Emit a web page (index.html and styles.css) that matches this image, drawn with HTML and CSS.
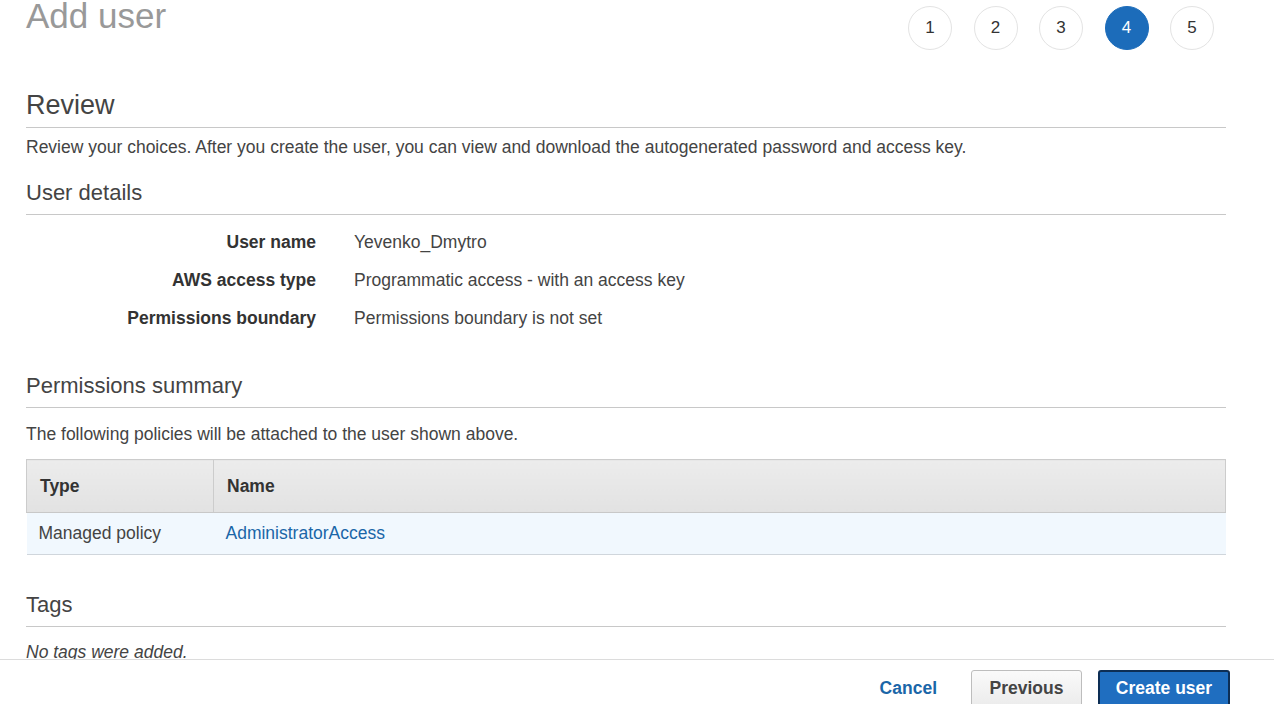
FILE: index.html
```html
<!DOCTYPE html>
<html>
<head>
<meta charset="utf-8">
<link rel="stylesheet" href="styles.css">
</head>
<body>
<div class="page">
  <div class="top">
    <h1 class="title">Add user</h1>
    <ol class="steps">
      <li class="step">1</li>
      <li class="step">2</li>
      <li class="step">3</li>
      <li class="step active">4</li>
      <li class="step">5</li>
    </ol>
  </div>

  <h2 class="h-main">Review</h2>
  <p class="intro">Review your choices. After you create the user, you can view and download the autogenerated password and access key.</p>

  <h3 class="h-sec">User details</h3>
  <dl class="details">
    <dt>User name</dt><dd>Yevenko_Dmytro</dd>
    <dt>AWS access type</dt><dd>Programmatic access - with an access key</dd>
    <dt>Permissions boundary</dt><dd>Permissions boundary is not set</dd>
  </dl>

  <h3 class="h-sec perm">Permissions summary</h3>
  <p class="intro small">The following policies will be attached to the user shown above.</p>
  <table class="policies">
    <thead>
      <tr><th class="c-type">Type</th><th>Name</th></tr>
    </thead>
    <tbody>
      <tr><td>Managed policy</td><td><a class="link" href="#">AdministratorAccess</a></td></tr>
    </tbody>
  </table>

  <h3 class="h-sec tags">Tags</h3>
  <p class="notags">No tags were added.</p>
</div>

<div class="footer">
  <a class="cancel" href="#">Cancel</a>
  <button class="btn prev">Previous</button>
  <button class="btn primary">Create user</button>
</div>
</body>
</html>
```

FILE: styles.css
```css
* { box-sizing: border-box; }
html, body { margin: 0; padding: 0; background: #fff; }
body {
  font-family: "Liberation Sans", Arial, sans-serif;
  color: #444;
  overflow: hidden;
  height: 704px;
}
.page {
  width: 1200px;
  margin-left: 26px;
}
.top {
  display: flex;
  justify-content: space-between;
  align-items: flex-start;
  height: 86px;
}
.title {
  margin: -6px 0 0 0;
  font-size: 35px;
  font-weight: normal;
  color: #999;
  line-height: 44px;
}
.steps {
  list-style: none;
  margin: 6px 12px 0 0;
  padding: 0;
  display: flex;
  gap: 21.5px;
}
.step {
  width: 44px;
  height: 44px;
  border-radius: 50%;
  border: 1px solid #e3e3e3;
  display: flex;
  align-items: center;
  justify-content: center;
  font-size: 17px;
  color: #333;
}
.step.active {
  background: #1c6cba;
  border-color: #1c6cba;
  color: #fff;
}
.h-main {
  margin: 0;
  font-size: 27px;
  font-weight: normal;
  color: #444;
  line-height: 38px;
  padding-bottom: 3px;
  border-bottom: 1px solid #c8c8c8;
}
.intro {
  margin: 8px 0 0 0;
  font-size: 17.5px;
  line-height: 22px;
  color: #444;
}
.h-sec {
  margin: 20px 0 0 0;
  font-size: 22px;
  font-weight: normal;
  color: #444;
  line-height: 30px;
  padding-bottom: 6px;
  border-bottom: 1px solid #c8c8c8;
}
.details {
  display: grid;
  grid-template-columns: 290px 1fr;
  column-gap: 38px;
  row-gap: 16px;
  margin: 16px 0 0 0;
  font-size: 17.5px;
  line-height: 22px;
}
.details dt {
  text-align: right;
  font-weight: bold;
  color: #333;
}
.details dd { margin: 0; color: #444; }
.h-sec.perm { margin-top: 42px; }
.intro.small { margin-top: 15px; }
.policies {
  margin-top: 14px;
  width: 1200px;
  border-collapse: collapse;
  font-size: 17.5px;
}
.policies th {
  text-align: left;
  font-weight: bold;
  color: #333;
  height: 53px;
  padding: 0 13px;
  background: linear-gradient(#ececec, #e2e2e2);
  border: 1px solid #cccccc;
  border-bottom: 1px solid #c8c8c8;
}
.policies th.c-type { width: 187px; }
.policies td {
  height: 42px;
  padding: 0 12px;
  background: #f1f8fe;
  border-bottom: 1px solid #d0d6dc;
  color: #444;
}
.link { color: #1a66a8; text-decoration: none; }
.h-sec.tags { margin-top: 35px; }
.notags {
  margin: 15px 0 0 0;
  font-size: 17.5px;
  font-style: italic;
  color: #444;
}
.footer {
  position: fixed;
  left: 0;
  right: 0;
  top: 659px;
  height: 60px;
  background: #fff;
  border-top: 1px solid #dcdcdc;
  display: flex;
  align-items: flex-start;
  justify-content: flex-end;
  padding: 10px 44px 0 0;
}
.cancel {
  font-weight: bold;
  font-size: 17.5px;
  line-height: 37px;
  color: #1a66a8;
  text-decoration: none;
  margin-right: 34px;
}
.btn {
  font-family: "Liberation Sans", Arial, sans-serif;
  font-weight: bold;
  font-size: 17.5px;
  height: 38px;
  border-radius: 3px;
  padding: 0 0 2px;
  white-space: nowrap;
}
.prev {
  width: 111px;
  background: linear-gradient(#fafafa, #ebebeb);
  border: 1px solid #bdbdbd;
  color: #444;
  margin-right: 16px;
}
.primary {
  width: 132px;
  background: #1f6ec0;
  border: 2px solid #0d2e55;
  color: #fff;
}
```
